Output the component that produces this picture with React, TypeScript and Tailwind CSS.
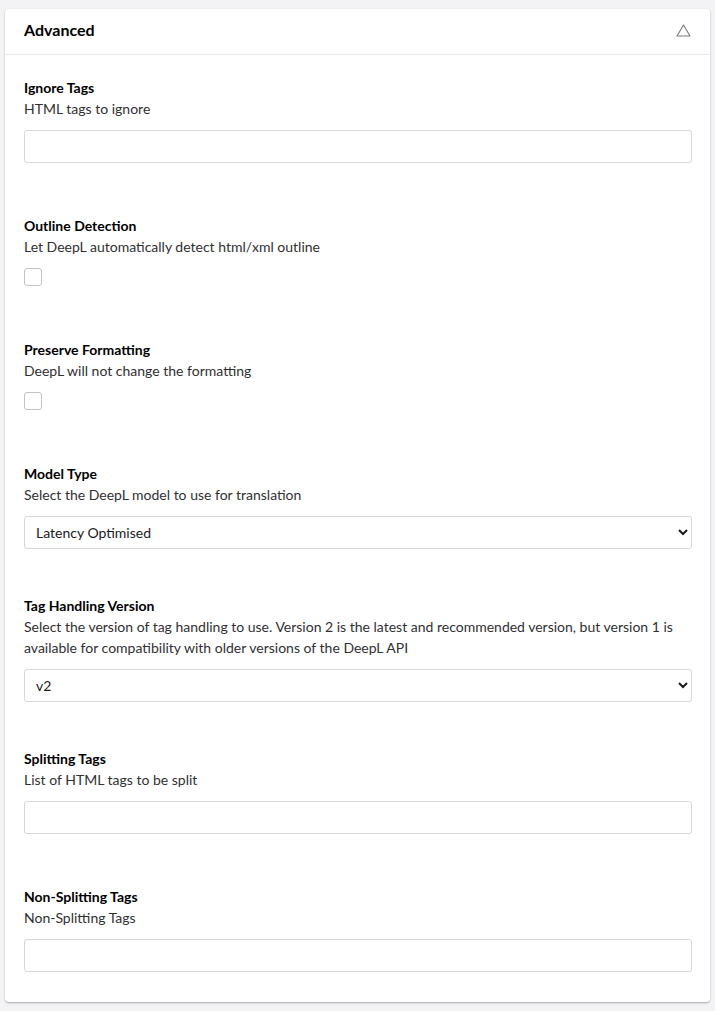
import React from 'react';

type Field =
  | { kind: 'text'; label: string; help: string }
  | { kind: 'check'; label: string; help: string }
  | { kind: 'select'; label: string; help: string; value: string; options: string[] };

const FIELDS: Field[] = [
  { kind: 'text', label: 'Ignore Tags', help: 'HTML tags to ignore' },
  { kind: 'check', label: 'Outline Detection', help: 'Let DeepL automatically detect html/xml outline' },
  { kind: 'check', label: 'Preserve Formatting', help: 'DeepL will not change the formatting' },
  {
    kind: 'select',
    label: 'Model Type',
    help: 'Select the DeepL model to use for translation',
    value: 'Latency Optimised',
    options: ['Latency Optimised', 'Quality Optimised', 'Prefer Quality Optimised'],
  },
  {
    kind: 'select',
    label: 'Tag Handling Version',
    help: 'Select the version of tag handling to use. Version 2 is the latest and recommended version, but version 1 is available for compatibility with older versions of the DeepL API',
    value: 'v2',
    options: ['v1', 'v2'],
  },
  { kind: 'text', label: 'Splitting Tags', help: 'List of HTML tags to be split' },
  { kind: 'text', label: 'Non-Splitting Tags', help: 'Non-Splitting Tags' },
];

// gap above a field depends on what control sits in the one before it
const GAP_AFTER: Record<Field['kind'], string> = {
  text: 'mt-[52px]',
  check: 'mt-[53px]',
  select: 'mt-[46px]',
};

function Control({ field }: { field: Field }) {
  if (field.kind === 'text') {
    return (
      <input
        type="text"
        className="block w-full h-[33px] px-3 text-sm text-[#303033] bg-white border border-[#d8d7d9] rounded-[3px] outline-none"
      />
    );
  }
  if (field.kind === 'check') {
    return (
      <input
        type="checkbox"
        className="block appearance-none w-[18px] h-[18px] bg-white border border-[#c3c3c6] rounded-[3px]"
      />
    );
  }
  return (
    <select
      defaultValue={field.value}
      className="block w-full h-[33px] pl-[7px] pr-1 text-sm text-[#1b1b1d] bg-white border border-[#d8d7d9] rounded-[3px] outline-none"
    >
      {field.options.map((o) => (
        <option key={o}>{o}</option>
      ))}
    </select>
  );
}

export default function App() {
  return (
    <div className="min-h-[1011px] bg-[#f3f3f5] pt-[9px] px-[5px] pb-[9px] font-['Lato','Open_Sans',sans-serif] text-[#303033]">
      <div className="bg-white rounded-[4px] shadow-[0_1px_2px_rgba(0,0,0,0.3)]">
        <div className="h-[46px] flex items-center justify-between pl-[19px] pr-[19px] border-b border-[#e9e9eb]">
          <h2 className="text-base font-bold text-[#000] leading-none -mt-[3px]">Advanced</h2>
          <svg width="15" height="13" viewBox="0 0 15 13" className="-mt-[3px]">
            <path d="M7.5 1 L14 12 L1 12 Z" fill="none" stroke="#7b7b7f" strokeWidth="1.1" strokeLinejoin="round" />
          </svg>
        </div>
        <div className="pt-[22px] pb-[30px] pl-[19px] pr-[18px] flex flex-col">
          {FIELDS.map((f, i) => (
            <div key={f.label} className={i === 0 ? '' : GAP_AFTER[FIELDS[i - 1].kind]}>
              <div className="text-sm font-bold leading-[21px] text-[#000]">{f.label}</div>
              <div className="text-sm leading-[21px] mb-[11px]">{f.help}</div>
              <Control field={f} />
            </div>
          ))}
        </div>
      </div>
    </div>
  );
}
